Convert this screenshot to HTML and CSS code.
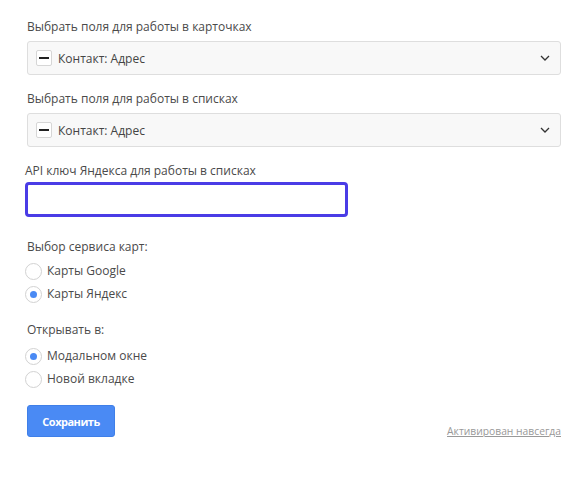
FILE: index.html
```html
<!DOCTYPE html>
<html lang="ru">
<head>
<meta charset="utf-8">
<link rel="stylesheet" href="styles.css">
</head>
<body>
<div class="page">
  <div class="field">
    <div class="label">Выбрать поля для работы в карточках</div>
    <div class="select">
      <span class="tag"><span class="minus"></span>Контакт: Адрес</span>
      <svg class="chev" width="10" height="6" viewBox="0 0 10 6"><path d="M1 1 L5 5 L9 1" fill="none" stroke="#333" stroke-width="1.3"/></svg>
    </div>
  </div>
  <div class="field">
    <div class="label">Выбрать поля для работы в списках</div>
    <div class="select">
      <span class="tag"><span class="minus"></span>Контакт: Адрес</span>
      <svg class="chev" width="10" height="6" viewBox="0 0 10 6"><path d="M1 1 L5 5 L9 1" fill="none" stroke="#333" stroke-width="1.3"/></svg>
    </div>
  </div>
  <div class="field">
    <div class="label">API ключ Яндекса для работы в списках</div>
    <div class="input"></div>
  </div>
  <div class="group">
    <div class="label">Выбор сервиса карт:</div>
    <div class="radios">
      <div class="radio"><span class="circle"></span>Карты Google</div>
      <div class="radio"><span class="circle on"></span>Карты Яндекс</div>
    </div>
  </div>
  <div class="group second">
    <div class="label">Открывать в:</div>
    <div class="radios">
      <div class="radio"><span class="circle on"></span>Модальном окне</div>
      <div class="radio"><span class="circle"></span>Новой вкладке</div>
    </div>
  </div>
  <div class="footer">
    <button class="btn">Сохранить</button>
    <a class="link" href="#">Активирован навсегда</a>
  </div>
</div>
</body>
</html>
```
FILE: styles.css
```css
html, body { margin: 0; padding: 0; background: #fff; }
body { font-family: "Open Sans", "Noto Sans", sans-serif; color: #4a4a4a; font-size: 12px; }
.page { padding: 19px 27px 0 27px; width: 534px; }
.label { line-height: 16px; height: 16px; }
.field { display: flex; flex-direction: column; gap: 6px; margin-bottom: 16px; }
.select {
  height: 32px; border: 1px solid #dedede; border-radius: 3px; background: #f8f8f8;
  display: flex; align-items: center; justify-content: space-between; padding: 0 10px 0 8px;
}
.tag { display: flex; align-items: center; gap: 6px; color: #444; }
.minus {
  width: 14px; height: 14px; border: 1px solid #d6d6d6; border-radius: 2px; background: #fff;
  display: flex; align-items: center; justify-content: center;
}
.minus::before { content: ""; width: 10px; height: 2px; background: #222; }
.chev { display: block; }
.field:nth-child(3) { gap: 3px; margin-left: -2px; margin-bottom: 22px; }
.input {
  width: 317px; height: 29px; border: 3px solid #4a3ce6; border-radius: 4px; background: #fff;
}
.group { display: flex; flex-direction: column; gap: 8px; margin-bottom: 20px; }
.group.second { gap: 10px; margin-bottom: 18px; }
.radios { display: flex; flex-direction: column; gap: 7px; }
.radio { display: flex; align-items: center; gap: 5px; line-height: 16px; height: 16px; margin-left: -2px; }
.circle {
  border: 1px solid #d2d2d2; border-radius: 50%; background: #fff;
  display: flex; align-items: center; justify-content: center; box-sizing: border-box;
  width: 17px; height: 17px;
}
.circle.on::before { content: ""; width: 7px; height: 7px; border-radius: 50%; background: #4a8af4; }
.footer { display: flex; justify-content: space-between; align-items: flex-end; }
.btn {
  width: 88px; height: 32px; background: #4a8af4; color: #fff; border: 1px solid #3f7fe8; border-radius: 3px;
  font-family: "Open Sans", sans-serif; font-weight: 700; font-size: 11px; letter-spacing: -0.5px; padding: 0;
}
.link { color: #999; font-size: 10.3px; text-decoration: underline; margin-bottom: -1px; }
```
